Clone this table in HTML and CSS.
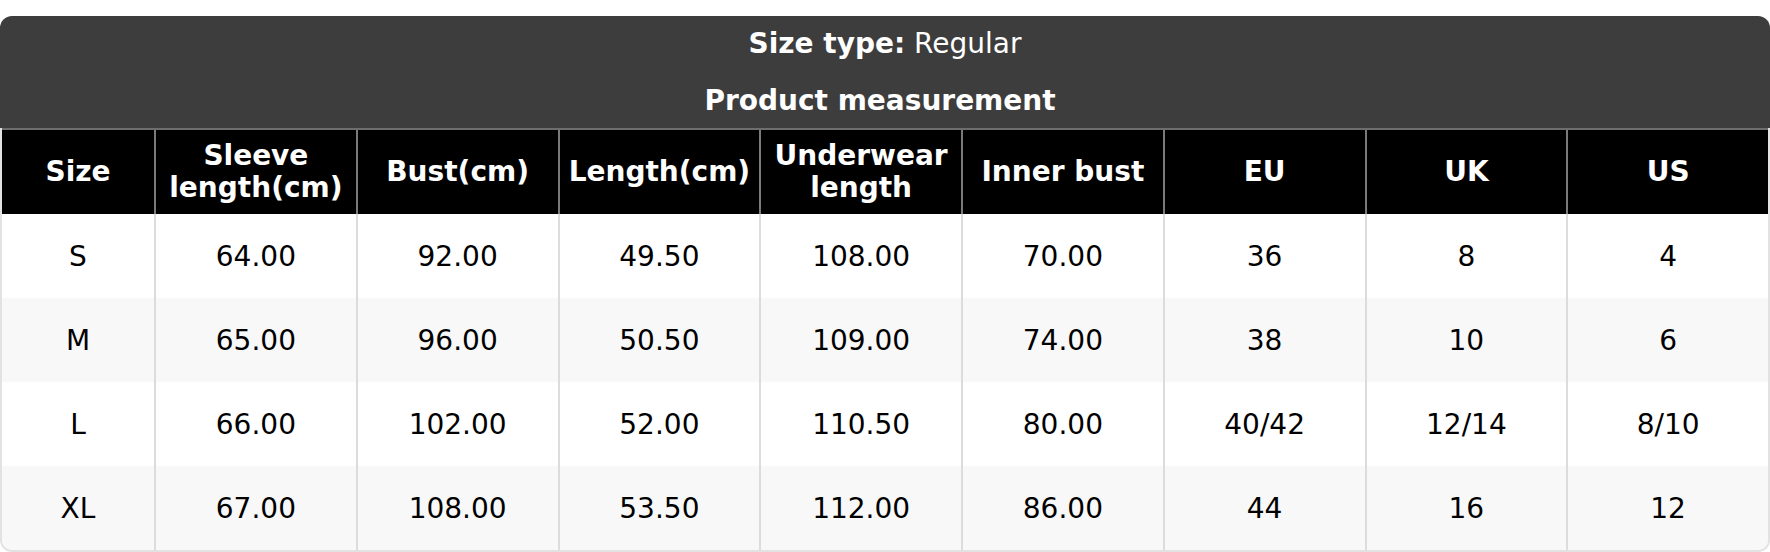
FILE: index.html
```html
<!DOCTYPE html>
<html>
<head>
<meta charset="utf-8">
<link rel="stylesheet" href="styles.css">
</head>
<body>
<div class="sheet">
  <div class="title">
    <div class="title-line"><b>Size type:</b> Regular</div>
    <div class="title-line shifted"><b>Product measurement</b></div>
  </div>
  <div class="table">
    <div class="row head">
      <div class="cell">Size</div>
      <div class="cell">Sleeve<br>length(cm)</div>
      <div class="cell">Bust(cm)</div>
      <div class="cell">Length(cm)</div>
      <div class="cell">Underwear<br>length</div>
      <div class="cell">Inner bust</div>
      <div class="cell">EU</div>
      <div class="cell">UK</div>
      <div class="cell">US</div>
    </div>
    <div class="row">
      <div class="cell">S</div><div class="cell">64.00</div><div class="cell">92.00</div><div class="cell">49.50</div><div class="cell">108.00</div><div class="cell">70.00</div><div class="cell">36</div><div class="cell">8</div><div class="cell">4</div>
    </div>
    <div class="row alt">
      <div class="cell">M</div><div class="cell">65.00</div><div class="cell">96.00</div><div class="cell">50.50</div><div class="cell">109.00</div><div class="cell">74.00</div><div class="cell">38</div><div class="cell">10</div><div class="cell">6</div>
    </div>
    <div class="row">
      <div class="cell">L</div><div class="cell">66.00</div><div class="cell">102.00</div><div class="cell">52.00</div><div class="cell">110.50</div><div class="cell">80.00</div><div class="cell">40/42</div><div class="cell">12/14</div><div class="cell">8/10</div>
    </div>
    <div class="row alt">
      <div class="cell">XL</div><div class="cell">67.00</div><div class="cell">108.00</div><div class="cell">53.50</div><div class="cell">112.00</div><div class="cell">86.00</div><div class="cell">44</div><div class="cell">16</div><div class="cell">12</div>
    </div>
  </div>
</div>
</body>
</html>
```

FILE: styles.css
```css
* { box-sizing: border-box; }
html, body { margin: 0; padding: 0; background: #fff; }
body {
  font-family: "DejaVu Sans", sans-serif;
  font-size: 28px;
  color: #000;
}
.sheet {
  width: 1770px;
  margin-top: 16px;
}
.title {
  height: 112px;
  background: #3d3d3d;
  color: #fff;
  border-radius: 12px 12px 0 0;
  padding: 12px 0 11px;
  display: flex;
  flex-direction: column;
  align-items: center;
  gap: 25px;
}
.title-line {
  line-height: 32px;
}
.title-line.shifted {
  padding-right: 10px;
}
.table {
  border: 2px solid #e2e2e2;
  border-top: none;
  border-radius: 0 0 12px 12px;
  overflow: hidden;
}
.row {
  display: grid;
  grid-template-columns: 152px repeat(8, 1fr);
  height: 84px;
  background: #fff;
}
.row.alt { background: #f8f8f8; }
.row.head {
  background: #000;
  color: #fff;
  font-weight: bold;
  border-top: 2px solid #6e6e6e;
  height: 86px;
}
.cell {
  display: flex;
  align-items: center;
  justify-content: center;
  text-align: center;
  line-height: 32px;
  padding-top: 1px;
  border-left: 2px solid #dcdcdc;
}
.head .cell { padding-top: 0; }
.cell:first-child { border-left: none; }
.head .cell { border-left-color: #7a7a7a; }
```
